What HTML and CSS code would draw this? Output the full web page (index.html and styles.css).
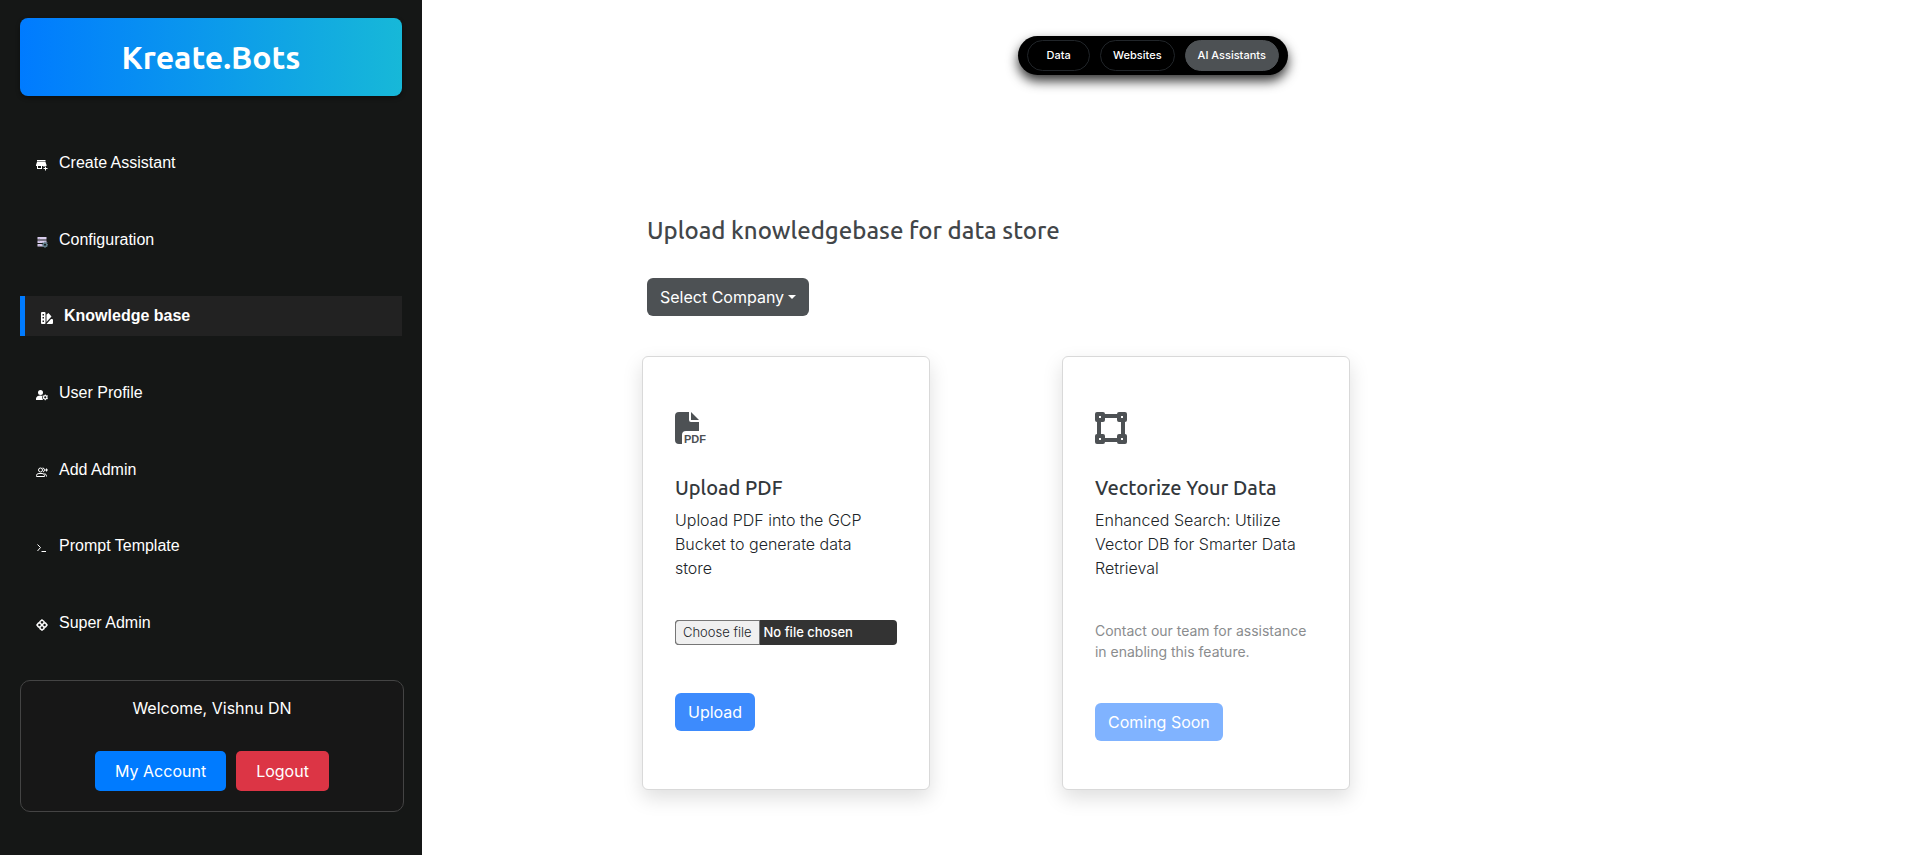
FILE: index.html
```html
<!DOCTYPE html>
<html lang="en">
<head>
<meta charset="utf-8">
<meta name="viewport" content="width=device-width, initial-scale=1">
<title>Kreate.Bots</title>
<link rel="stylesheet" href="styles.css">
</head>
<body>
<div class="layout">
  <aside class="sidebar">
    <div class="brand">Kreate.Bots</div>
    <nav class="nav" aria-label="Main">
      <a class="nav-link" href="#">
        <svg class="nav-icon" viewBox="0 0 24 24" fill="currentColor" aria-hidden="true"><path d="M2 2h17v3H2zM2 6h17l2 6v2h-4v2h-2v-2h-3v6H2v-6H0v-2zM4 14v4h6v-4zM18 15h2v3h3v2h-3v3h-2v-3h-3v-2h3z"/></svg>
        <span>Create Assistant</span>
      </a>
      <a class="nav-link" href="#">
        <svg class="nav-icon" viewBox="0 0 24 24" aria-hidden="true"><path fill="#d9cdec" d="M3 2h18v5H3zM3 9h18v5H3zM3 16h11v5H3z"/><path fill="#9d8cc0" d="M5 4h3v1H5zM5 11h3v1H5zM5 18h3v1H5z"/><circle cx="18" cy="17.500" r="3.500" fill="none" stroke="#607d8b" stroke-width="3"/><path stroke="#607d8b" stroke-width="2" d="M18 11v3M18 21v3M11.500 17.500h3M21.500 17.500h3M13.500 13l2 2M20.500 20l2 2M22.500 13l-2 2M15.500 20l-2 2"/></svg>
        <span>Configuration</span>
      </a>
      <a class="nav-link nav-link-active" href="#" aria-current="page">
        <svg class="nav-icon" viewBox="0 0 24 24" fill="currentColor" aria-hidden="true"><path fill-rule="evenodd" d="M2 0h5q2 0 2 2v20q0 2-2 2H2q-2 0-2-2V2q0-2 2-2zM3 4v3h3V4zM3 10v3h3v-3zM3 17v3h3v-3zM11 5l4-3 6 7-10 11zM20 14h2q2 0 2 2v6q0 2-2 2H11z"/></svg>
        <span>Knowledge base</span>
      </a>
      <a class="nav-link" href="#">
        <svg class="nav-icon" viewBox="0 0 24 24" fill="currentColor" aria-hidden="true"><circle cx="9" cy="7" r="5"/><path d="M0 22v-3q1-6 9-6 2 0 4 1-2 4 1 8z"/><circle cx="18.500" cy="16.500" r="3.500" fill="none" stroke="currentColor" stroke-width="2.500"/><path stroke="currentColor" stroke-width="2" d="M18.500 11v2M18.500 20v2.500M13.500 13.500l2 1M21.500 18.500l2 1M13.500 19.500l2-1M21.500 14.500l2-1"/></svg>
        <span>User Profile</span>
      </a>
      <a class="nav-link" href="#">
        <svg class="nav-icon" viewBox="0 0 24 24" fill="none" stroke="currentColor" stroke-width="2" aria-hidden="true"><circle cx="9" cy="8" r="4"/><path d="M13 4q4 0 4 4 0 3-3 4M1 21v-2q0-4 5-4h6q5 0 5 4v2zM17 15q4 1 4 6M18 8h6M21 5v6"/></svg>
        <span>Add Admin</span>
      </a>
      <a class="nav-link" href="#">
        <svg class="nav-icon" viewBox="0 0 24 24" fill="none" stroke="currentColor" stroke-width="2" aria-hidden="true"><path d="M3 5l6 6-6 7M11 19h9"/></svg>
        <span>Prompt Template</span>
      </a>
      <a class="nav-link" href="#">
        <svg class="nav-icon" viewBox="0 0 24 24" fill="none" stroke="currentColor" stroke-width="3" aria-hidden="true"><path d="M12 2l4 3v3l-4 4-4-4V5zM12 12l4 4v3l-4 3-4-3v-3zM2 12l3-4h3l4 4-4 4H5zM12 12l4-4h3l3 4-3 4h-3z"/></svg>
        <span>Super Admin</span>
      </a>
    </nav>
    <section class="account" aria-label="Account">
      <p class="account-greeting">Welcome, Vishnu DN</p>
      <div class="account-actions">
        <button class="account-button" type="button">My Account</button>
        <button class="account-button account-button-danger" type="button">Logout</button>
      </div>
    </section>
  </aside>

  <main class="main">
    <div class="tabs-row">
      <div class="tabs">
        <button class="tab" type="button">Data</button>
        <button class="tab" type="button">Websites</button>
        <button class="tab tab-active" type="button">AI Assistants</button>
      </div>
    </div>

    <div class="content">
      <div class="intro">
        <h1 class="title">Upload knowledgebase for data store</h1>
        <div class="company">
          <select class="company-select" aria-label="Company">
            <option>Select Company</option>
          </select>
        </div>
      </div>

      <div class="cards">
        <article class="card">
          <svg class="card-icon" viewBox="0 0 32 32" fill="currentColor" aria-hidden="true">
            <path d="M4 0h10v8q0 2 2 2h8v9H11q-4 0-4 4v9H4q-4 0-4-4V4q0-4 4-4z"/>
            <path d="M16 0l8 8h-8z"/>
            <text class="card-icon-text" x="9" y="31">PDF</text>
          </svg>
          <h2 class="card-title">Upload PDF</h2>
          <p class="card-text">Upload PDF into the GCP Bucket to generate data store</p>
          <label class="file">
            <input class="file-input" type="file">
            <span class="file-button">Choose file</span>
            <span class="file-name">No file chosen</span>
          </label>
          <button class="button" type="button">Upload</button>
        </article>

        <article class="card">
          <svg class="card-icon" viewBox="0 0 32 32" fill="currentColor" aria-hidden="true">
            <path fill-rule="evenodd" d="M2 0h6q2 0 2 2h12q0-2 2-2h6q2 0 2 2v6q0 2-2 2v12q2 0 2 2v6q0 2-2 2h-6q-2 0-2-2H10q0 2-2 2H2q-2 0-2-2v-6q0-2 2-2V10q-2 0-2-2V2q0-2 2-2zM10 6v2q0 2-2 2H6v12h2q2 0 2 2v2h12v-2q0-2 2-2h2V10h-2q-2 0-2-2V6zM4 4v2h2V4zM26 4v2h2V4zM4 26v2h2v-2zM26 26v2h2v-2z"/>
          </svg>
          <h2 class="card-title">Vectorize Your Data</h2>
          <p class="card-text">Enhanced Search: Utilize Vector DB for Smarter Data Retrieval</p>
          <p class="card-note">Contact our team for assistance in enabling this feature.</p>
          <button class="button" type="button" disabled>Coming Soon</button>
        </article>
      </div>
    </div>
  </main>
</div>
</body>
</html>
```
FILE: styles.css
```css
* {
  box-sizing: border-box;
}

body {
  margin: 0;
  background: #fff;
  color: #212529;
  font-family: Inter, "Liberation Sans", sans-serif;
  font-size: 16px;
  line-height: 24px;
}

h1,
h2,
p {
  margin: 0;
}

button,
select {
  font: inherit;
  cursor: pointer;
}

.layout {
  display: grid;
  grid-template-columns: 22% 1fr;
  min-height: 100vh;
}

/* Sidebar */

.sidebar {
  display: flex;
  flex-direction: column;
  padding: 18px 20px 43px;
  background: #151716;
  color: #fff;
}

.brand {
  padding: 19px;
  border-radius: 8px;
  background: linear-gradient(90deg, #007bff, #17b8d8);
  box-shadow: 0 2px 4px rgba(0, 0, 0, 0.4);
  font-family: Ubuntu, "Noto Sans", sans-serif;
  font-size: 32px;
  font-weight: 700;
  line-height: 40px;
  text-align: center;
}

.nav {
  display: flex;
  flex: 1;
  flex-direction: column;
  justify-content: space-between;
  margin: 47px 0 37px;
  font-family: "Liberation Sans", Arial, sans-serif;
}

.nav-link {
  display: flex;
  align-items: center;
  gap: 11px;
  padding: 8px 16px;
  color: #fff;
  text-decoration: none;
}

.nav-link-active {
  border-left: 5px solid #007bff;
  background: #222;
  font-weight: 700;
}

.nav-icon {
  width: 12px;
  height: 12px;
  margin-top: 4px;
}

.account {
  box-sizing: content-box;
  width: 100%;
  padding: 15px 0 20px;
  border: 1px solid #444;
  border-radius: 10px;
  background: #171717;
  text-align: center;
}

.account-actions {
  display: flex;
  justify-content: center;
  gap: 10px;
  margin-top: 31px;
}

.account-button {
  padding: 8px 20px;
  border: 0;
  border-radius: 5px;
  background: #007bff;
  color: #fff;
}

.account-button-danger {
  background: #dc3545;
}

/* Main area */

.main {
  padding-top: 36px;
}

.tabs-row {
  display: flex;
  justify-content: center;
  padding-right: 34px;
}

.tabs {
  display: flex;
  gap: 10px;
  padding: 4px 9px;
  border-radius: 20px;
  background: #000;
  box-shadow: 0 6px 12px rgba(0, 0, 0, 0.8);
}

.tab {
  min-width: 63px;
  padding: 7px 12px;
  border: 1px solid #212529;
  border-radius: 16px;
  background: #000;
  color: #fff;
  font-size: 11px;
  font-weight: 500;
  line-height: 15px;
}

.tab-active {
  border-color: #4d5154;
  background: #4d5154;
}

.content {
  width: 100%;
  max-width: 1056px;
  margin: 0 auto;
  padding: 141px 0 40px;
}

.intro {
  padding-left: 5px;
}

.title {
  color: #424649;
  font-family: Ubuntu, "Noto Sans", sans-serif;
  font-size: 24px;
  font-weight: 500;
  line-height: 30px;
}

.company {
  position: relative;
  display: inline-block;
  margin-top: 32px;
}

.company::after {
  content: "";
  position: absolute;
  top: 17px;
  right: 13px;
  border: 4px solid transparent;
  border-top-color: #fff;
  border-bottom: 0;
  pointer-events: none;
}

.company-select {
  display: block;
  padding: 7px 24px 7px 13px;
  border: 0;
  border-radius: 6px;
  background: #4d5154;
  color: #fff;
  appearance: none;
}

.cards {
  display: flex;
  flex-wrap: wrap;
  gap: 132px;
  margin-top: 40px;
}

.card {
  display: flex;
  flex-direction: column;
  align-items: flex-start;
  width: 288px;
  min-height: 434px;
  padding: 55px 32px 47px;
  border: 1px solid #d9d9d9;
  border-radius: 6px;
  background: #fff;
  box-shadow: 0 8px 20px rgba(0, 0, 0, 0.13);
}

.card-icon {
  width: 32px;
  height: 32px;
  overflow: visible;
  color: #4d5154;
}

.card-icon-text {
  font-family: "Liberation Sans", sans-serif;
  font-size: 11px;
  font-weight: 700;
}

.card-title {
  margin-top: 32px;
  color: #33383c;
  font-family: Ubuntu, "Noto Sans", sans-serif;
  font-size: 20px;
  font-weight: 500;
  line-height: 24px;
}

.card-text {
  margin-top: 8px;
  padding-right: 8px;
  font-weight: 300;
}

.file {
  position: relative;
  display: flex;
  align-self: stretch;
  margin-top: 40px;
  overflow: hidden;
  border-radius: 4px;
  background: #333;
  font-size: 13px;
  line-height: 23px;
  cursor: pointer;
}

.file-input {
  position: absolute;
  inset: 0;
  opacity: 0;
}

.file-button {
  padding: 0 7px;
  border: 1px solid #767676;
  border-radius: 4px 0 0 4px;
  background: #f0f0f0;
  color: #212529;
  font-weight: 300;
}

.file-name {
  padding: 1px 4px;
  color: #fff;
  font-weight: 500;
}

.button {
  margin-top: 48px;
  padding: 7px 13px;
  border: 0;
  border-radius: 6px;
  background: #3d8bfd;
  color: #fff;
}

.card-note {
  margin-top: 40px;
  color: #8a8c8e;
  font-size: 14px;
  line-height: 21px;
}

.card-note + .button {
  margin-top: 41px;
}

.button:disabled {
  background: #80b3ff;
  cursor: default;
}
```
